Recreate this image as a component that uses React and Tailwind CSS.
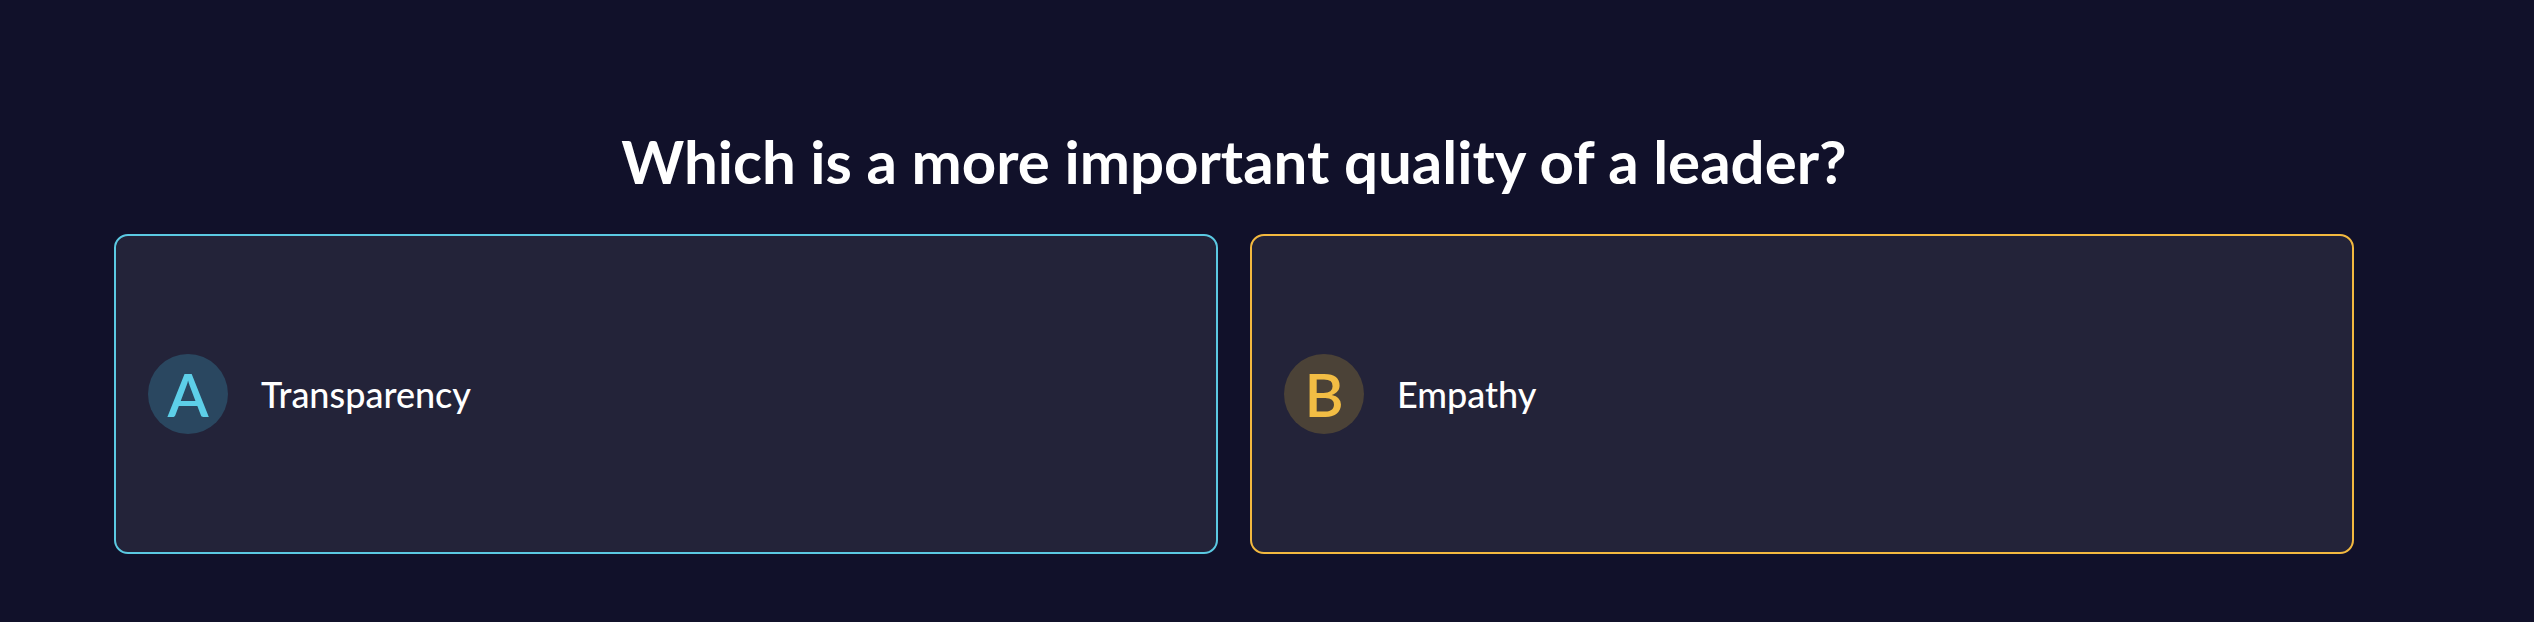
const options = [
  {
    letter: 'A',
    label: 'Transparency',
    card: 'border-[#5bc9e2]',
    badge: 'bg-[#2a4760] text-[#5dcfe8]',
  },
  {
    letter: 'B',
    label: 'Empathy',
    card: 'border-[#f3b93f]',
    badge: 'bg-[#4b4237] text-[#f2bd44]',
  },
];

function OptionCard({ letter, label, card, badge }) {
  return (
    <div className={`h-[320px] rounded-[14px] border-2 bg-[#232339] px-[32px] flex items-center ${card}`}>
      <div className={`w-[80px] h-[80px] rounded-full flex items-center justify-center text-[60px] font-semibold leading-none ${badge}`}>
        {letter}
      </div>
      <span className="ml-[33px] text-[36px] font-medium text-white leading-none">{label}</span>
    </div>
  );
}

export default function App() {
  return (
    <div
      className="w-full min-h-[622px] bg-[#11112a] pl-[114px] pr-[180px] pt-[131px] flex flex-col"
      style={{ fontFamily: 'Lato, "Noto Sans", sans-serif' }}
    >
      <h1 className="text-center text-white text-[60px] font-bold leading-none">
        Which is a more important quality of a leader?
      </h1>
      <div className="mt-[43px] grid grid-cols-2 gap-[32px]">
        {options.map(o => (
          <OptionCard key={o.letter} {...o} />
        ))}
      </div>
    </div>
  );
}
